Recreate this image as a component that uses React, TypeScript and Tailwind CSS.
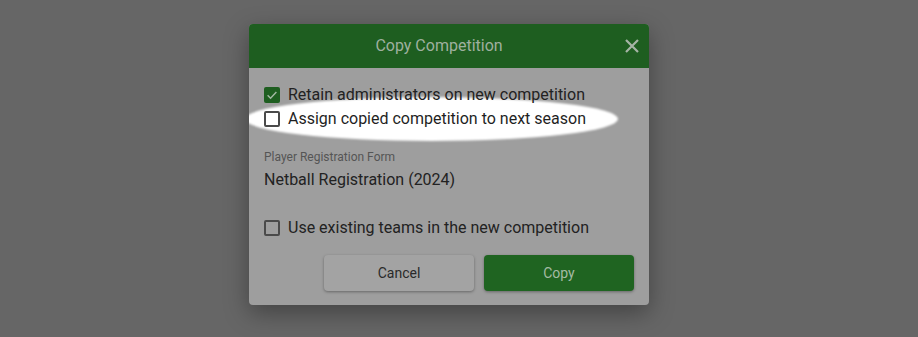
import React from 'react';

const CheckBox: React.FC<{ checked?: boolean }> = ({ checked }) =>
  checked ? (
    <span className="w-4 h-4 rounded-[2px] bg-[#1e5e20] flex items-center justify-center shrink-0">
      <svg viewBox="0 0 24 24" className="w-[14px] h-[14px]" fill="none" stroke="#a3b8a3" strokeWidth="2.5">
        <path d="M4.5 12.5l5 5L19.5 7" />
      </svg>
    </span>
  ) : (
    <span className="w-4 h-4 rounded-[2px] border-2 border-[#4a4a4a] shrink-0" />
  );

const App: React.FC = () => {
  return (
    <div className="w-full h-[337px] bg-[#666666] flex justify-center pt-6 pr-5 font-['Roboto',sans-serif]">
      <div className="w-[400px] h-[281px] rounded-[4px] bg-[#9e9e9e] shadow-[0_8px_24px_rgba(0,0,0,0.35)] overflow-hidden flex flex-col">
        {/* Header */}
        <div className="h-[44px] bg-[#1e5e20] relative flex items-center justify-center pr-5 shrink-0">
          <span className="text-[16px] text-[#9fb09f]">Copy Competition</span>
          <button className="absolute right-[10px] top-[15px] w-[14px] h-[14px]">
            <svg viewBox="0 0 14 14" className="w-[14px] h-[14px]" stroke="#a6b4a6" strokeWidth="2.2">
              <path d="M1 1l12 12M13 1L1 13" />
            </svg>
          </button>
        </div>

        {/* Body */}
        <div className="flex flex-col pl-[15px] pr-[15px] pt-[15px] text-[#222222]">
          <label className="relative z-10 h-6 flex items-center gap-2 text-[16px]">
            <CheckBox checked />
            <span>Retain administrators on new competition</span>
          </label>
          <div className="relative h-6">
            <div className="absolute left-[-19px] top-[-10px] w-[373px] h-[44px] rounded-[50%] bg-white blur-[1px]" />
            <label className="relative h-6 flex items-center gap-2 text-[16px] text-[#1f1f1f]">
              <CheckBox />
              <span>Assign copied competition to next season</span>
            </label>
          </div>

          <div className="mt-[18px] h-4 leading-4 text-[12px] text-[#555555]">Player Registration Form</div>
          <div className="mt-[3px] h-6 leading-6 text-[16px]">Netball Registration (2024)</div>

          <label className="mt-[24px] h-6 flex items-center gap-2 text-[16px]">
            <CheckBox />
            <span>Use existing teams in the new competition</span>
          </label>

          <div className="mt-[15px] flex justify-end gap-[10px]">
            <button className="w-[150px] h-9 rounded-[4px] bg-[#a3a3a3] text-[14px] text-[#2a2a2a] shadow-[0_1px_3px_rgba(0,0,0,0.35)]">
              Cancel
            </button>
            <button className="w-[150px] h-9 rounded-[4px] bg-[#1f6421] text-[14px] text-[#a4bba4] shadow-[0_1px_3px_rgba(0,0,0,0.35)]">
              Copy
            </button>
          </div>
        </div>
      </div>
    </div>
  );
};

export default App;
